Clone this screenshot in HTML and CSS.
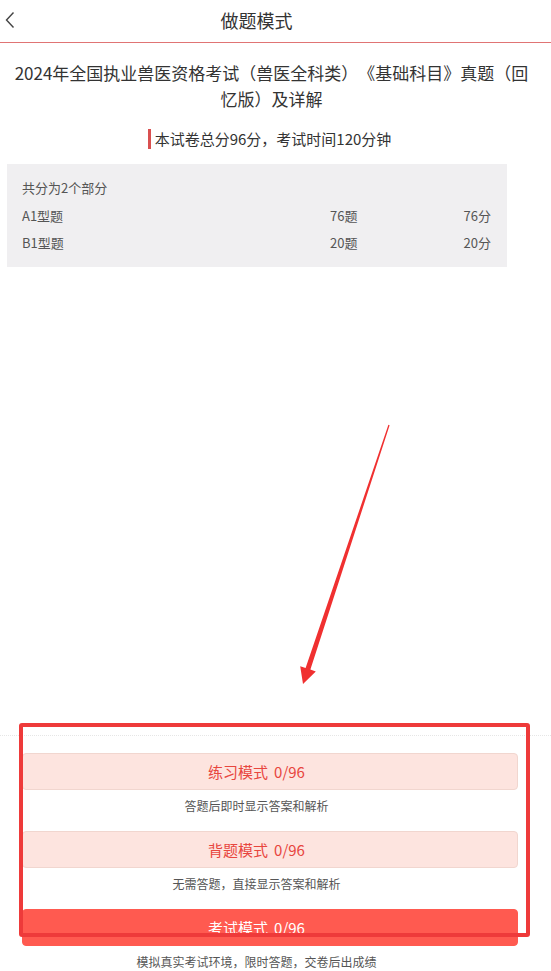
FILE: index.html
```html
<!DOCTYPE html>
<html lang="zh-CN">
<head>
    <meta charset="UTF-8">
    <meta name="viewport" content="width=device-width, initial-scale=1.0">
    <title>做题模式</title>
    <link rel="stylesheet" href="styles.css">
</head>
<body>
    <div class="page">
        <div class="header">
            <span class="back">
                <svg width="10" height="18" viewBox="0 0 10 18">
                    <path d="M8.5 1.5 L1.5 9 L8.5 16.5" fill="none" stroke="#444" stroke-width="1.4"/>
                </svg>
            </span>
            <h1>做题模式</h1>
        </div>

        <div class="paper-title">2024年全国执业兽医资格考试（兽医全科类）《基础科目》真题（回忆版）及详解</div>

        <div class="paper-info">
            <span class="bar"></span>
            <span>本试卷总分96分，考试时间120分钟</span>
        </div>

        <div class="parts">
            <div class="parts-head">共分为2个部分</div>
            <div class="part-row">
                <span>A1型题</span>
                <span>76题</span>
                <span>76分</span>
            </div>
            <div class="part-row">
                <span>B1型题</span>
                <span>20题</span>
                <span>20分</span>
            </div>
        </div>

        <!-- 标注箭头 -->
        <svg class="mark-arrow" width="110" height="280" viewBox="0 0 110 280">
            <polygon points="99.6,10.2 20.4,254.6 25.8,256.5 13,269 10.2,251.2 15.6,253 98.4,9.8" fill="#f03030"/>
        </svg>

        <div class="modes">
            <div class="mode-btn light">练习模式<span class="count">0/96</span></div>
            <div class="mode-desc">答题后即时显示答案和解析</div>
            <div class="mode-btn light">背题模式<span class="count">0/96</span></div>
            <div class="mode-desc">无需答题，直接显示答案和解析</div>
            <div class="mode-btn solid">考试模式<span class="count">0/96</span></div>
            <div class="mode-desc">模拟真实考试环境，限时答题，交卷后出成绩</div>

            <!-- 标注框 -->
            <div class="mark-box"></div>
        </div>
    </div>
</body>
</html>
```

FILE: styles.css
```css
body {
    margin: 0;
    font-family: "Noto Sans CJK SC", "Noto Sans", sans-serif;
    color: #333;
    background-color: #fff;
    text-spacing-trim: space-all;
}

.page {
    position: relative;
    min-height: 100vh;
    display: flex;
    flex-direction: column;
    overflow: hidden;
}

.header {
    position: relative;
    height: 42px;
    border-bottom: 1px solid #e07474;
    padding-right: 38px;
    box-sizing: content-box;
}

.header h1 {
    margin: 0;
    font-size: 18px;
    font-weight: normal;
    line-height: 40px;
    text-align: center;
    color: #333;
}

.back {
    position: absolute;
    left: 5px;
    top: 11px;
    width: 10px;
    height: 18px;
}

.back svg {
    display: block;
}

.paper-title {
    margin-top: 17px;
    padding: 0 18px 0 10px;
    font-size: 17px;
    line-height: 26px;
    text-align: center;
    color: #333;
}

.paper-info {
    display: flex;
    justify-content: center;
    align-items: center;
    gap: 4px;
    margin-top: 16px;
    padding-right: 12px;
    font-size: 15px;
    line-height: 22px;
    color: #333;
}

.paper-info .bar {
    width: 3px;
    height: 20px;
    background-color: #d95050;
}

.parts {
    margin: 14px 44px 0 7px;
    padding: 10px 16px 10px 15px;
    background-color: #f0eff1;
    font-size: 13px;
    color: #555;
}

.parts-head,
.part-row {
    line-height: 27.5px;
}

.part-row {
    display: grid;
    grid-template-columns: 308px 1fr auto;
}

.mark-arrow {
    position: absolute;
    left: 290px;
    top: 415px;
}

.modes {
    position: relative;
    margin-top: auto;
    padding: 17px 33px 0 22px;
    border-top: 1px dotted #e6e6e6;
}

.mode-btn {
    height: 37px;
    box-sizing: border-box;
    padding-right: 27px;
    border-radius: 4px;
    font-size: 15px;
    line-height: 35px;
    text-align: center;
}

.mode-btn .count {
    margin-left: 6px;
}

.mode-btn.light {
    background-color: #fde4df;
    border: 1px solid #f1d6cf;
    color: #e8463e;
}

.mode-btn.solid {
    background-color: #ff5a50;
    border: 1px solid #ff5a50;
    color: #fff;
}

.mode-desc {
    padding: 7px 27px 16px 0;
    font-size: 12px;
    line-height: 18px;
    text-align: center;
    color: #555;
}

.modes .mode-desc:nth-last-child(2) {
    padding-bottom: 0;
}

.mark-box {
    position: absolute;
    left: 19px;
    top: -13px;
    width: 511px;
    height: 214px;
    box-sizing: border-box;
    border: 4px solid #ee3a3a;
    border-radius: 3px;
    pointer-events: none;
}
```
